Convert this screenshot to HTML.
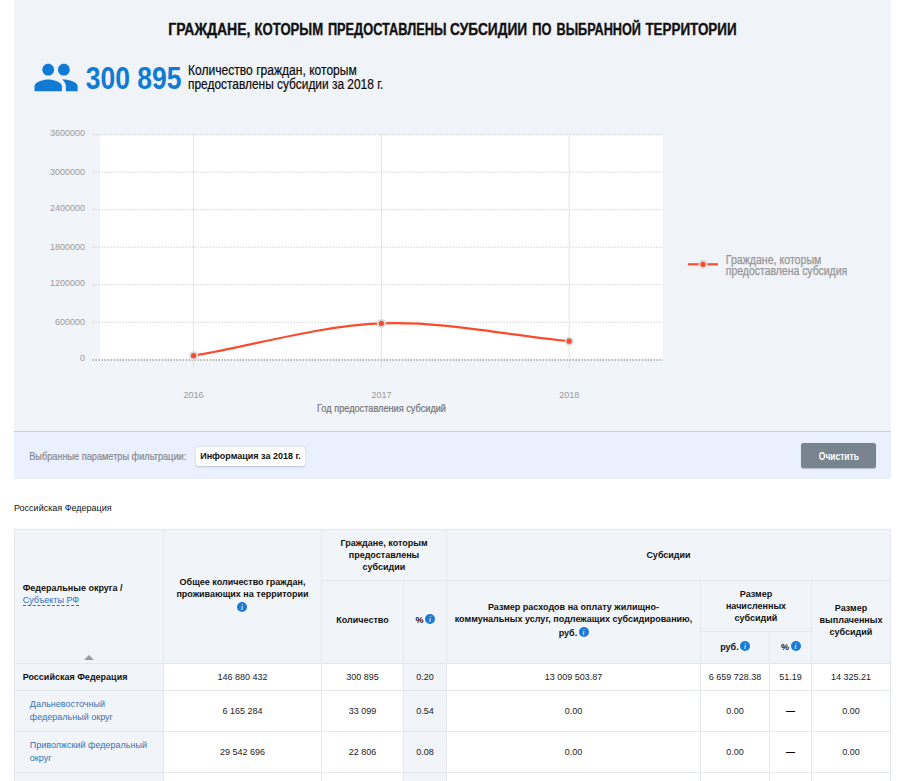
<!DOCTYPE html>
<html lang="ru">
<head>
<meta charset="utf-8">
<title>Граждане, которым предоставлены субсидии</title>
<style>
html,body{margin:0;padding:0;background:#fff;}
body{width:912px;height:781px;overflow:hidden;position:relative;font-family:"Liberation Sans",sans-serif;font-size:9px;color:#222;}
#panel{position:absolute;left:14px;top:0;width:877px;height:431px;background:#f0f3f8;border-bottom:1px solid #cfd0d2;}
#chartbg{position:absolute;left:25px;top:120px;width:638px;height:299px;background:#f1f4f9;}
#filter{position:absolute;left:14px;top:432px;width:877px;height:47px;background:#eaf0fd;}
#top{position:absolute;left:0;top:0;}
#chip{position:absolute;left:196px;top:447px;width:109px;height:19px;background:#fff;border-radius:3px;box-shadow:0 0.5px 2px rgba(90,100,130,.35);font-weight:bold;font-size:9px;line-height:19px;text-align:center;color:#111;white-space:nowrap;}
#btn{position:absolute;left:801px;top:443px;width:75px;height:25px;background:#78858f;border-radius:2.5px;box-shadow:0 0.5px 1px rgba(60,70,90,.3);}
#crumb{position:absolute;left:14px;top:502.5px;font-size:9px;line-height:11px;color:#111;white-space:nowrap;}

#grid{position:absolute;left:14px;top:529px;width:877px;border-collapse:collapse;table-layout:fixed;font-size:9px;line-height:12px;color:#222;}
#grid th,#grid td{border:1px solid #e4e8ed;padding:0;text-align:center;overflow:visible;}
#grid th{background:#f1f4f8;font-weight:bold;vertical-align:top;color:#111;position:relative;}
#grid th.l{text-align:left;padding-left:7.7px;}
#grid td{background:#fff;vertical-align:middle;}
#grid td.g{background:#f1f4f8;}
#grid td.n{background:#f1f4f8;text-align:left;padding-left:7.7px;}
#grid td.b{font-weight:bold;color:#111;}
#grid td.s{padding-left:14.8px;line-height:13px;}
#grid td.s a{color:#3a72b2;}
a.dash{color:#2b6fbd;font-weight:normal;border-bottom:1px dashed #2b6fbd;}
.inf{display:inline-block;width:10px;height:10px;border-radius:50%;background:#1b7ad4;color:#fff;font:italic normal 8.5px/10px "Liberation Serif",serif;text-align:center;vertical-align:middle;position:relative;top:-1.7px;margin-left:-0.9px;margin-right:-0.5px;text-indent:-0.5px;}
.sort{position:absolute;left:69px;top:125px;width:0;height:0;border-left:5px solid transparent;border-right:5px solid transparent;border-bottom:5.5px solid #9a9a9a;}
.l3{position:relative;top:1.5px;}
#grid td.d{font-weight:bold;color:#000;}
</style>
</head>
<body>
<div id="panel"></div>
<div id="chartbg"></div>
<div id="filter"></div>
<div id="chip">Информация за 2018 г.</div>
<div id="btn"></div>
<div id="crumb">Российская Федерация</div>
<svg id="top" width="912" height="500" viewBox="0 0 912 500" font-family="'Liberation Sans',sans-serif">
<!-- title -->
<g font-size="16" font-weight="bold" fill="#111" stroke="#111" stroke-width="0.35">
<text x="168.3" y="34.6" textLength="82.1" lengthAdjust="spacingAndGlyphs">ГРАЖДАНЕ,</text>
<text x="254.5" y="34.6" textLength="68.6" lengthAdjust="spacingAndGlyphs">КОТОРЫМ</text>
<text x="327.9" y="34.6" textLength="118.5" lengthAdjust="spacingAndGlyphs">ПРЕДОСТАВЛЕНЫ</text>
<text x="450.0" y="34.6" textLength="77.1" lengthAdjust="spacingAndGlyphs">СУБСИДИИ</text>
<text x="532.2" y="34.6" textLength="19.2" lengthAdjust="spacingAndGlyphs">ПО</text>
<text x="556.5" y="34.6" textLength="84.4" lengthAdjust="spacingAndGlyphs">ВЫБРАННОЙ</text>
<text x="645.4" y="34.6" textLength="91.2" lengthAdjust="spacingAndGlyphs">ТЕРРИТОРИИ</text>
</g>
<!-- people icon -->
<g transform="translate(32.54,54) scale(1.96)" fill="#107ad5">
<path d="M16 11c1.660 0 2.990-1.340 2.990-3S17.660 5 16 5c-1.660 0-3 1.340-3 3s1.340 3 3 3zm-8 0c1.660 0 2.990-1.340 2.990-3S9.660 5 8 5C6.340 5 5 6.340 5 8s1.340 3 3 3zm0 2c-2.330 0-7 1.170-7 3.500V19h14v-2.500c0-2.330-4.670-3.500-7-3.500zm8 0c-.290 0-.620.020-.970.050 1.160.840 1.970 1.970 1.970 3.450V19h6v-2.500c0-2.330-4.670-3.500-7-3.500z"/>
</g>
<text x="85.7" y="88.7" font-size="31.3" font-weight="bold" fill="#107ad5" textLength="95.8" lengthAdjust="spacingAndGlyphs">300 895</text>
<text x="188" y="75" font-size="14" fill="#0a0a0a" stroke="#0a0a0a" stroke-width="0.2" textLength="168.8" lengthAdjust="spacingAndGlyphs">Количество граждан, которым</text>
<text x="188" y="89.3" font-size="14" fill="#0a0a0a" stroke="#0a0a0a" stroke-width="0.2" textLength="195.4" lengthAdjust="spacingAndGlyphs">предоставлены субсидии за 2018 г.</text>
<!-- chart -->
<rect x="100" y="135" width="563" height="225.5" fill="#fff"/>
<g stroke="#dcdfe2" stroke-width="0.9" fill="none">
<path d="M193.6 135V367.7M381.4 135V367.7M569.2 135V367.7"/>
</g>
<g stroke="#c6c6c6" stroke-width="0.8" stroke-dasharray="1.5 1.5" fill="none">
<path d="M92.4 134.7H663M92.4 172.2H663M92.4 209.7H663M92.4 247.2H663M92.4 284.7H663M92.4 322.2H663"/>
</g>
<path d="M92.4 360H663" stroke="#b4b4b4" stroke-width="1.8" stroke-dasharray="1.5 1.5" fill="none"/>
<g font-size="9" fill="#999" text-anchor="end">
<text x="85" y="136.2">3600000</text>
<text x="85" y="174.6">3000000</text>
<text x="85" y="211.1">2400000</text>
<text x="85" y="249.5">1800000</text>
<text x="85" y="286.1">1200000</text>
<text x="85" y="324.5">600000</text>
<text x="85" y="361.3">0</text>
</g>
<g font-size="9" fill="#999" text-anchor="middle">
<text x="193.6" y="398">2016</text>
<text x="381.4" y="398">2017</text>
<text x="569.2" y="398">2018</text>
</g>
<text x="317" y="412.1" font-size="10.5" fill="#747474" stroke="#747474" stroke-width="0.2" textLength="129" lengthAdjust="spacingAndGlyphs">Год предоставления субсидий</text>
<path d="M193.6 355.7C256.2 344.9 318.8 325.8 381.4 323.4C444 321 506.6 335.3 569.2 341.2" stroke="#fb4a2b" stroke-width="2.200" fill="none" stroke-linecap="round"/>
<g>
<circle cx="193.600" cy="355.700" r="4.5" fill="#d5dbe0"/><circle cx="193.600" cy="355.700" r="2.6" fill="#fb4a2b"/>
<circle cx="381.400" cy="323.400" r="4.5" fill="#d5dbe0"/><circle cx="381.400" cy="323.400" r="2.6" fill="#fb4a2b"/>
<circle cx="569.200" cy="341.200" r="4.5" fill="#d5dbe0"/><circle cx="569.200" cy="341.200" r="2.6" fill="#fb4a2b"/>
</g>
<!-- legend -->
<path d="M687.900 264.300H717.900" stroke="#fb4a2b" stroke-width="2.200" fill="none"/>
<circle cx="703" cy="264.300" r="4.5" fill="#d5dbe0"/><circle cx="703" cy="264.300" r="2.6" fill="#fb4a2b"/>
<text x="725.800" y="263.700" font-size="12" fill="#969696" stroke="#969696" stroke-width="0.25" textLength="95.500" lengthAdjust="spacingAndGlyphs">Граждане, которым</text>
<text x="725.800" y="274.700" font-size="12" fill="#969696" stroke="#969696" stroke-width="0.25" textLength="121.400" lengthAdjust="spacingAndGlyphs">предоставлена субсидия</text>
<!-- filter bar -->
<text x="29.200" y="460.300" font-size="10.5" fill="#868990" stroke="#868990" stroke-width="0.2" textLength="157" lengthAdjust="spacingAndGlyphs">Выбранные параметры фильтрации:</text>
<text x="818.800" y="460" font-size="10.500" font-weight="bold" fill="#fff" textLength="40.100" lengthAdjust="spacingAndGlyphs">Очистить</text>

</svg>
<table id="grid">
<colgroup><col style="width:149px"><col style="width:158px"><col style="width:82px"><col style="width:43px"><col style="width:254px"><col style="width:69px"><col style="width:42px"><col style="width:79px"></colgroup>
<thead>
<tr style="height:51.1px">
<th rowspan="3" class="l" style="padding-top:52.0px">Федеральные округа /<br><a class="dash">Субъекты РФ</a><span class="sort"></span></th>
<th rowspan="3" style="padding-top:46.3px">Общее количество граждан,<br>проживающих на территории<br><i class="inf" style="top:-0.4px">i</i></th>
<th colspan="2" style="padding-top:6.8px">Граждане, которым<br>предоставлены<br>субсидии</th>
<th colspan="4" style="padding-top:19.0px">Субсидии</th>
</tr>
<tr style="height:50.8px">
<th rowspan="2" style="padding-top:33.1px">Количество</th>
<th rowspan="2" style="padding-top:33.2px">% <i class="inf">i</i></th>
<th rowspan="2" style="padding-top:20.2px">Размер расходов на оплату жилищно-<br>коммунальных услуг, подлежащих субсидированию,<br><span class="l3">руб. <i class="inf">i</i></span></th>
<th colspan="2" style="padding-top:6.7px">Размер<br>начисленных<br>субсидий</th>
<th rowspan="2" style="padding-top:20.8px">Размер<br>выплаченных<br>субсидий</th>
</tr>
<tr style="height:32.1px">
<th style="padding-top:9.4px">руб. <i class="inf">i</i></th>
<th style="padding-top:9.4px">% <i class="inf">i</i></th>
</tr>
</thead>
<tbody>
<tr style="height:26.7px"><td class="n b">Российская Федерация</td><td>146 880 432</td><td>300 895</td><td class="g">0.20</td><td>13 009 503.87</td><td>6 659 728.38</td><td>51.19</td><td>14 325.21</td></tr>
<tr style="height:41.2px"><td class="n s"><a>Дальневосточный<br>федеральный округ</a></td><td>6 165 284</td><td>33 099</td><td class="g">0.54</td><td>0.00</td><td>0.00</td><td class="d">—</td><td>0.00</td></tr>
<tr style="height:41.1px"><td class="n s"><a>Приволжский федеральный<br>округ</a></td><td>29 542 696</td><td>22 806</td><td class="g">0.08</td><td>0.00</td><td>0.00</td><td class="d">—</td><td>0.00</td></tr>
<tr style="height:41.1px"><td class="n s"><a>Северо-Западный<br>федеральный округ</a></td><td>13 952 003</td><td>18 640</td><td class="g">0.13</td><td>0.00</td><td>0.00</td><td class="d">—</td><td>0.00</td></tr>
</tbody>
</table>

</body>
</html>
